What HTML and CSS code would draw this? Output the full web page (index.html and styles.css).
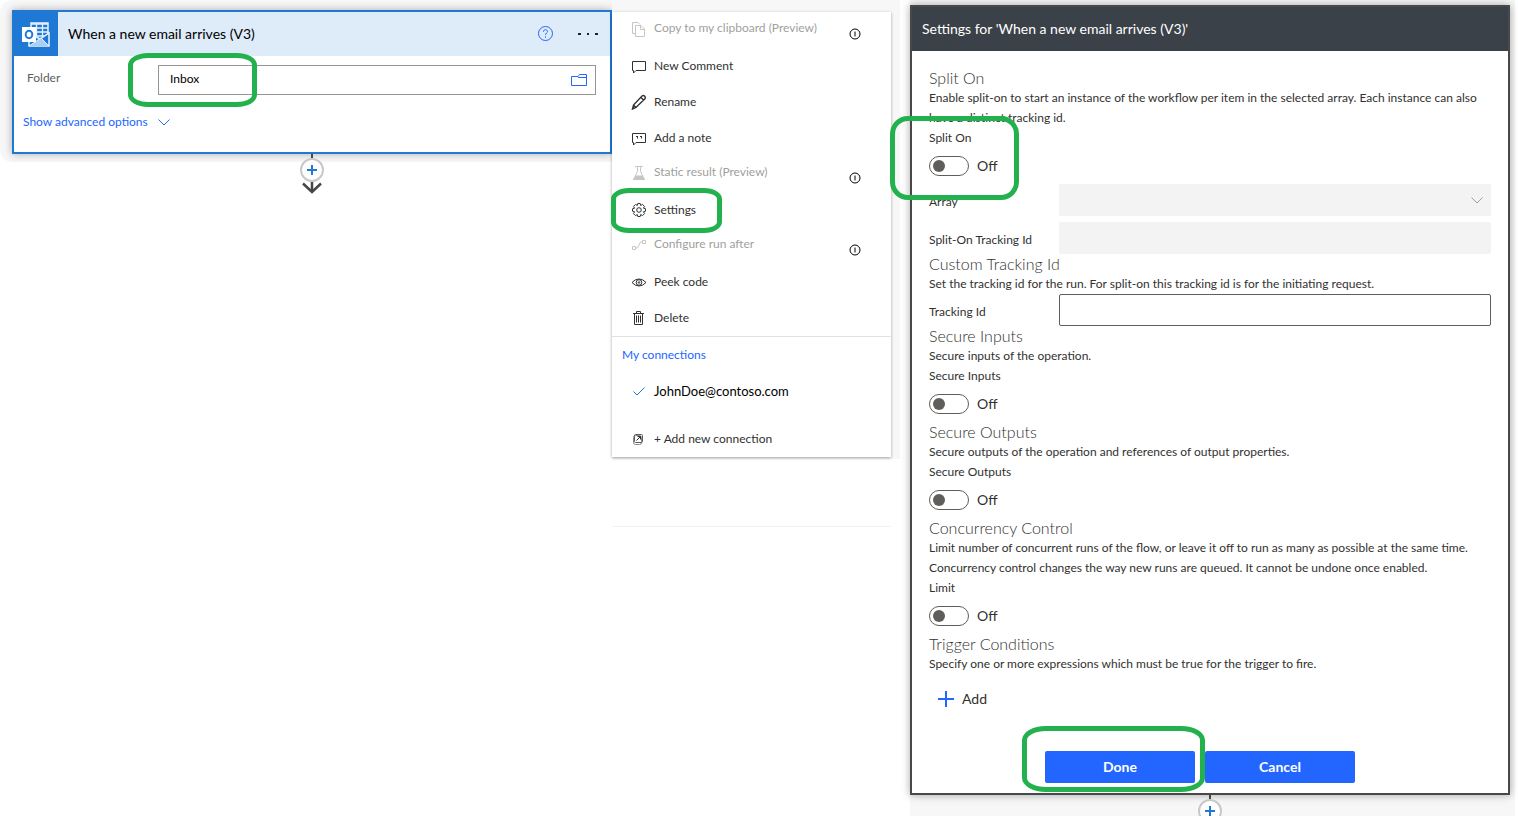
FILE: index.html
```html
<!DOCTYPE html>
<html lang="en">
<head>
    <meta charset="UTF-8">
    <meta name="viewport" content="width=device-width, initial-scale=1.0">
    <title>When a new email arrives (V3)</title>
    <link rel="stylesheet" href="styles.css">
</head>
<body>
<main class="designer">
    <!-- Trigger card -->
    <section class="trigger-pane">
        <div class="card-backdrop">
            <div class="trigger-card">
                <header class="card-header">
                    <div class="card-logo">
                        <svg width="30" height="26" viewBox="0 0 30 26">
                            <path d="M10 2h17v13H10z" fill="#1f78d4" stroke="#e8f3ff" stroke-width="1.5"/>
                            <path d="M10 3h17M10 7h17M10 11h17M15.500 2v13M21.500 2v13" stroke="#e8f3ff" stroke-width="1.300" fill="none"/>
                            <path d="M8 13v12h20V12l-9 6-9-5" fill="#1f78d4" stroke="#e8f3ff" stroke-width="1.500"/>
                            <path d="M8 25l12-8 8 8" fill="#a9cff5" stroke="#e8f3ff"/>
                            <path d="M1 6h14v15H1z" fill="#fff"/>
                            <ellipse cx="8" cy="13.500" rx="3.300" ry="3.800" fill="none" stroke="#1f78d4" stroke-width="2"/>
                        </svg>
                    </div>
                    <h1 class="card-title">When a new email arrives (V3)</h1>
                    <button class="icon-btn" aria-label="Help">
                        <svg width="16" height="16" viewBox="0 0 16 16" fill="none" stroke="#2266ff">
                            <circle cx="8.500" cy="7.500" r="7"/>
                            <path d="M6.500 6v-.5c0-1.200 1-1.800 2-1.800s2 .7 2 1.800c0 1.500-2 1.600-2 3.400M8.500 10.300v1.400"/>
                        </svg>
                    </button>
                    <button class="icon-btn" aria-label="More">
                        <svg width="22" height="4" viewBox="0 0 22 4" fill="#222">
                            <path d="M1 1h3v2H1zM10 1h2v2h-2zM18 1h3v2h-3z"/>
                        </svg>
                    </button>
                </header>
                <div class="card-body">
                    <div class="folder-row">
                        <label class="folder-label" for="folder">Folder</label>
                        <div class="folder-box">
                            <input type="text" id="folder" value="Inbox">
                            <button class="icon-btn folder-btn" aria-label="Pick folder">
                                <svg width="16" height="12" viewBox="0 0 16 12" fill="none" stroke="#2266ff">
                                    <path d="M.5 2.500h6.500l1.500-2h7v11H.5zM7 3.500h8.500"/>
                                </svg>
                            </button>
                            <span class="marker marker-inbox"></span>
                        </div>
                    </div>
                    <button class="advanced-btn">Show advanced options
                        <svg width="12" height="7" viewBox="0 0 12 7" fill="none" stroke="#2266ff"><path d="M.5.5L6 6 11.500.5"/></svg>
                    </button>
                </div>
            </div>
        </div>
        <div class="connector">
            <span class="connector-line"></span>
            <button class="connector-add" aria-label="Insert step">
                <svg width="10" height="10" viewBox="0 0 10 10" stroke="#1f78d4" stroke-width="2"><path d="M5 0v10M0 5h10"/></svg>
            </button>
            <svg width="20" height="12" viewBox="0 0 20 12" fill="none" stroke="#484644" stroke-width="2.500"><path d="M10 0v10M1 1.500l9 8.500 9-8.500"/></svg>
        </div>
    </section>

    <!-- Context menu -->
    <section class="menu-pane">
        <div class="menu-backdrop">
            <div class="menu">
                <button class="menu-item" disabled>
                    <svg class="menu-icon" viewBox="0 0 16 16"><path d="M4.500 12.500h-3v-11H7l2 2M4.500 4.500H10l3.500 3.500v7.500h-9zM9.500 4.500v4h4"/></svg>
                    <span>Copy to my clipboard (Preview)</span>
                    <svg class="info" viewBox="0 0 12 12"><circle cx="6" cy="6" r="5"/><path d="M6 3.500v5"/></svg>
                </button>
                <button class="menu-item">
                    <svg class="menu-icon" viewBox="0 0 16 16"><path d="M1.500 3.500h13v9H5l-2.500 2.500v-2.500h-1z"/></svg>
                    <span>New Comment</span>
                </button>
                <button class="menu-item">
                    <svg class="menu-icon" viewBox="0 0 16 16"><path d="M1.500 15l1-4 8.500-9q1.500-1 2.700.2t.2 2.600L5 13.500zM2.500 11L5 13.500M10 3.500l2.500 2.500" stroke-width="1.400"/></svg>
                    <span>Rename</span>
                </button>
                <button class="menu-item">
                    <svg class="menu-icon" viewBox="0 0 16 16"><path d="M1.500 3.500h13v9H5l-2.500 2.500v-2.500h-1z"/><path d="M5.500 6v1M6.500 6v2.500M9.500 6v1M10.500 6v2.500"/></svg>
                    <span>Add a note</span>
                </button>
                <button class="menu-item" disabled>
                    <svg class="menu-icon" viewBox="0 0 16 16"><path d="M4 1.500h8M6.500 1.500v5l-4 8h11l-4-8v-5"/><path d="M4.500 10.500h7l2.500 4.500H2z" fill="#c8c6c4" stroke="none"/></svg>
                    <span>Static result (Preview)</span>
                    <svg class="info" viewBox="0 0 12 12"><circle cx="6" cy="6" r="5"/><path d="M6 3.500v5"/></svg>
                </button>
                <button class="menu-item">
                    <svg class="menu-icon" viewBox="0 0 16 16"><path d="M6.800 1.500h2.400l.5 2 1.800-1.100 2 2-1.100 1.800 2.100.6v2.400l-2.100.6 1.100 1.800-2 2-1.800-1.100-.5 2H6.800l-.5-2-1.800 1.100-2-2 1.100-1.800-2.100-.6V6.800l2.100-.6-1.100-1.800 2-2 1.800 1.100z"/><circle cx="8" cy="8" r="2.300"/></svg>
                    <span>Settings</span>
                    <span class="marker marker-settings"></span>
                </button>
                <button class="menu-item" disabled>
                    <svg class="menu-icon" viewBox="0 0 16 16"><path d="M1.500 9.500h3v3h-3zM11.500 3.500h3v3h-3zM4.500 11h2l3-6h2"/></svg>
                    <span>Configure run after</span>
                    <svg class="info" viewBox="0 0 12 12"><circle cx="6" cy="6" r="5"/><path d="M6 3.500v5"/></svg>
                </button>
                <button class="menu-item">
                    <svg class="menu-icon" viewBox="0 0 16 16"><path d="M1 8.500q3-3.500 7-3.500t7 3.500q-3 3.500-7 3.500t-7-3.500z"/><circle cx="8" cy="8.500" r="2.800"/><circle cx="8" cy="8.500" r=".8"/></svg>
                    <span>Peek code</span>
                </button>
                <button class="menu-item">
                    <svg class="menu-icon" viewBox="0 0 16 16"><path d="M2 3.500h11M5.500 3.500v-2h4v2M3.500 3.500v11h8v-11M5.500 5.500v7M7.500 5.500v7M9.500 5.500v7"/></svg>
                    <span>Delete</span>
                </button>
                <div class="connections">
                    <h2>My connections</h2>
                    <button class="menu-item account">
                        <svg class="menu-icon" viewBox="0 0 16 16"><path d="M2.500 8.500L6 12l7.500-7.500" stroke="#1f78d4"/></svg>
                        <span>JohnDoe@contoso.com</span>
                    </button>
                    <button class="menu-item add-connection">
                        <svg class="menu-icon" viewBox="0 0 16 16"><rect x="2.500" y="4.500" width="8" height="9" rx="2" stroke="#8a8886"/><rect x="3.500" y="3.500" width="8" height="8" rx="1" stroke="#605e5c"/><path d="M5.500 9.500l4-4M6.500 5.500h3v3"/></svg>
                        <span>+ Add new connection</span>
                    </button>
                </div>
            </div>
        </div>
        <div class="menu-tail"></div>
    </section>

    <!-- Settings dialog -->
    <section class="dialog-pane">
        <div class="dialog">
            <header class="dialog-header">Settings for 'When a new email arrives (V3)'</header>
            <div class="dialog-body">
                <h3>Split On</h3>
                <p>Enable split-on to start an instance of the workflow per item in the selected array. Each instance can also have a distinct tracking id.</p>
                <div class="toggle-group">
                    <label for="split-on">Split On</label>
                    <div class="toggle-row"><input type="checkbox" id="split-on"><span>Off</span></div>
                    <span class="marker marker-split"></span>
                </div>
                <div class="field-list">
                    <div class="field">
                        <label for="array">Array</label>
                        <div class="select-box">
                            <select id="array" disabled></select>
                            <svg width="12" height="7" viewBox="0 0 12 7" fill="none" stroke="#a19f9d"><path d="M.5.5L6 6 11.500.5"/></svg>
                        </div>
                    </div>
                    <div class="field">
                        <label for="split-id">Split-On Tracking Id</label>
                        <input type="text" id="split-id" disabled>
                    </div>
                </div>

                <h3>Custom Tracking Id</h3>
                <p>Set the tracking id for the run. For split-on this tracking id is for the initiating request.</p>
                <div class="field">
                    <label for="tracking-id">Tracking Id</label>
                    <input type="text" id="tracking-id">
                </div>

                <h3>Secure Inputs</h3>
                <p>Secure inputs of the operation.</p>
                <div class="toggle-group">
                    <label for="secure-in">Secure Inputs</label>
                    <div class="toggle-row"><input type="checkbox" id="secure-in"><span>Off</span></div>
                </div>

                <h3>Secure Outputs</h3>
                <p>Secure outputs of the operation and references of output properties.</p>
                <div class="toggle-group">
                    <label for="secure-out">Secure Outputs</label>
                    <div class="toggle-row"><input type="checkbox" id="secure-out"><span>Off</span></div>
                </div>

                <h3>Concurrency Control</h3>
                <p>Limit number of concurrent runs of the flow, or leave it off to run as many as possible at the same time. Concurrency control changes the way new runs are queued. It cannot be undone once enabled.</p>
                <div class="toggle-group">
                    <label for="limit">Limit</label>
                    <div class="toggle-row"><input type="checkbox" id="limit"><span>Off</span></div>
                </div>

                <h3>Trigger Conditions</h3>
                <p>Specify one or more expressions which must be true for the trigger to fire.</p>
                <button class="add-btn">
                    <svg width="16" height="16" viewBox="0 0 16 16" stroke="#2266ff" stroke-width="2"><path d="M8 0v16M0 8h16"/></svg>
                    Add
                </button>
            </div>
            <footer class="dialog-footer">
                <div class="done-box">
                    <button class="primary-btn">Done</button>
                    <span class="marker marker-done"></span>
                </div>
                <button class="primary-btn">Cancel</button>
            </footer>
        </div>
        <div class="connector">
            <span class="connector-line"></span>
            <button class="connector-add" aria-label="Insert step">
                <svg width="10" height="10" viewBox="0 0 10 10" stroke="#1f78d4" stroke-width="2"><path d="M5 0v10M0 5h10"/></svg>
            </button>
        </div>
    </section>
</main>
</body>
</html>
```
FILE: styles.css
```css
* {
    box-sizing: border-box;
}
body {
    margin: 0;
    background-color: #ffffff;
    color: #323130;
    font-family: Lato, "Open Sans", sans-serif;
    font-size: 12px;
    line-height: 20px;
}
button, input, select {
    font: inherit;
    color: inherit;
    margin: 0;
}
button {
    background: none;
    border: none;
    padding: 0;
    cursor: pointer;
}
svg {
    display: block;
    flex-shrink: 0;
}
h1, h2, h3, p {
    margin: 0;
    font-weight: normal;
}
.designer {
    display: flex;
    align-items: flex-start;
    height: 100vh;
    overflow: hidden;
    padding-right: 3px;
}

/* Trigger card */
.trigger-pane {
    flex: 1 1 612px;
    min-width: 400px;
}
.card-backdrop {
    background-color: #f7f7f7;
    border-radius: 12px 0 0 12px;
    padding: 10px 0 8px 12px;
}
.trigger-card {
    background-color: #ffffff;
    border: 2px solid #1f78d4;
    box-shadow: 0 0 8px rgba(0, 0, 0, 0.3);
}
.card-header {
    display: flex;
    align-items: center;
    gap: 24px;
    height: 44px;
    padding-right: 11px;
    background-color: #deebf9;
}
.card-logo {
    display: flex;
    align-items: center;
    justify-content: center;
    width: 44px;
    height: 44px;
    background-color: #1f78d4;
}
.card-title {
    flex: 1;
    margin-left: -14px;
    color: #000000;
    font-size: 14px;
}
.icon-btn {
    display: flex;
}
.card-body {
    padding: 9px 14px 20px 9px;
}
.folder-row {
    display: flex;
}
.folder-label {
    width: 135px;
    padding: 3px 4px;
    color: #605e5c;
}
.folder-box {
    position: relative;
    display: flex;
    align-items: center;
    flex: 1;
    height: 30px;
    padding: 0 8px 0 11px;
    border: 1px solid #969696;
}
.folder-box input {
    flex: 1;
    min-width: 0;
    padding: 0 0 2px;
    border: none;
    outline: none;
    color: #000000;
}
.advanced-btn {
    display: flex;
    align-items: center;
    gap: 10px;
    margin-top: 17px;
    color: #2266ff;
}

/* Add-step connector below a card */
.connector {
    display: flex;
    flex-direction: column;
    align-items: center;
}
.trigger-pane .connector {
    margin-top: -8px;
    padding-left: 12px;
}
.connector-line {
    width: 2px;
    height: 4px;
    background-color: #484644;
}
.connector-add {
    position: relative;
    display: flex;
    align-items: center;
    justify-content: center;
    width: 24px;
    height: 24px;
    border: 2px solid #c8c8c8;
    border-radius: 50%;
    background-color: #ffffff;
}

/* Context menu */
.menu-pane {
    flex: 0 0 288px;
}
.menu-backdrop {
    padding: 12px 9px 2px 0;
    background-color: #f7f7f7;
}
.menu {
    background-color: #ffffff;
    box-shadow: 0 1px 3px rgba(0, 0, 0, 0.35);
}
.menu-item {
    position: relative;
    display: flex;
    align-items: center;
    gap: 7px;
    width: 100%;
    height: 36px;
    padding: 0 30px 0 19px;
    text-align: left;
}
.menu-item:disabled {
    align-items: flex-start;
    color: #a19f9d;
    line-height: 32px;
    cursor: default;
}
.menu-icon {
    width: 16px;
    height: 16px;
    fill: none;
    stroke: #323130;
}
.menu-item:disabled .menu-icon {
    margin-top: 9px;
    stroke: #c8c6c4;
}
.info {
    width: 12px;
    height: 12px;
    margin: 16px 0 0 auto;
    fill: none;
    stroke: #000000;
}
.connections {
    border-top: 1px solid #e1e1e1;
}
.connections h2 {
    padding: 8px 10px;
    color: #2266ff;
    font-size: 12px;
}
.account {
    color: #000000;
    font-size: 13px;
}
.add-connection {
    margin-top: 12px;
}
.menu-tail {
    height: 68px;
    margin-right: 9px;
    border-bottom: 1px solid #f3f3f3;
}

/* Settings dialog */
.dialog-pane {
    flex: 0 1 605px;
    min-height: 100vh;
    margin-left: 10px;
    padding: 5px 5px 0 0;
    background-color: #f7f7f7;
}
.dialog {
    background-color: #ffffff;
    border: 2px solid #484848;
    box-shadow: 0 0 8px rgba(0, 0, 0, 0.35);
}
.dialog-header {
    height: 44px;
    padding: 0 10px;
    background-color: #3b4148;
    color: #ffffff;
    font-size: 14px;
    line-height: 44px;
}
.dialog-body {
    padding: 17px 17px 0;
}
.dialog-body h3 {
    font-size: 16px;
    font-weight: 300;
    line-height: 20px;
}
.toggle-group {
    position: relative;
}
.toggle-group label {
    display: block;
}
.toggle-row {
    display: flex;
    align-items: center;
    gap: 8px;
    padding: 8px 0;
    font-size: 14px;
}
.toggle-row input {
    appearance: none;
    display: flex;
    align-items: center;
    width: 40px;
    height: 20px;
    padding: 0 3px;
    border: 1px solid #605e5c;
    border-radius: 10px;
}
.toggle-row input::before {
    content: "";
    width: 12px;
    height: 12px;
    border-radius: 50%;
    background-color: #605e5c;
}
.field-list {
    display: grid;
    gap: 6px;
}
.field {
    display: flex;
}
.field label {
    width: 130px;
    padding-top: 8px;
}
.field input, .select-box {
    flex: 1;
    min-width: 0;
    height: 32px;
    border: 1px solid #605e5c;
    border-radius: 2px;
}
.field input:disabled, .select-box {
    border: none;
    background-color: #f3f3f3;
}
.select-box {
    display: flex;
    align-items: center;
    padding-right: 8px;
}
.select-box select {
    appearance: none;
    flex: 1;
    border: none;
    background: none;
}
.add-btn {
    display: flex;
    align-items: center;
    gap: 8px;
    height: 32px;
    margin-top: 9px;
    padding: 0 9px;
    font-size: 14px;
}
.dialog-footer {
    display: flex;
    justify-content: center;
    gap: 10px;
    padding: 36px 20px 10px 0;
}
.done-box {
    position: relative;
}
.primary-btn {
    width: 150px;
    height: 32px;
    border-radius: 2px;
    background-color: #2266ff;
    color: #ffffff;
    font-size: 14px;
    font-weight: bold;
}

/* Green highlight outlines */
.marker {
    position: absolute;
    z-index: 1;
    border: 5px solid #22b14c;
    pointer-events: none;
}
.marker-inbox {
    top: -13px;
    left: -31px;
    width: 129px;
    height: 54px;
    border-radius: 20px / 12px;
}
.marker-settings {
    top: -4px;
    left: -1px;
    width: 111px;
    height: 45px;
    border-radius: 18px / 11px;
}
.marker-split {
    top: -12px;
    left: -39px;
    width: 129px;
    height: 84px;
    border-radius: 18px;
}
.marker-done {
    top: -25px;
    left: -23px;
    width: 183px;
    height: 66px;
    border-radius: 24px / 14px;
}
```
